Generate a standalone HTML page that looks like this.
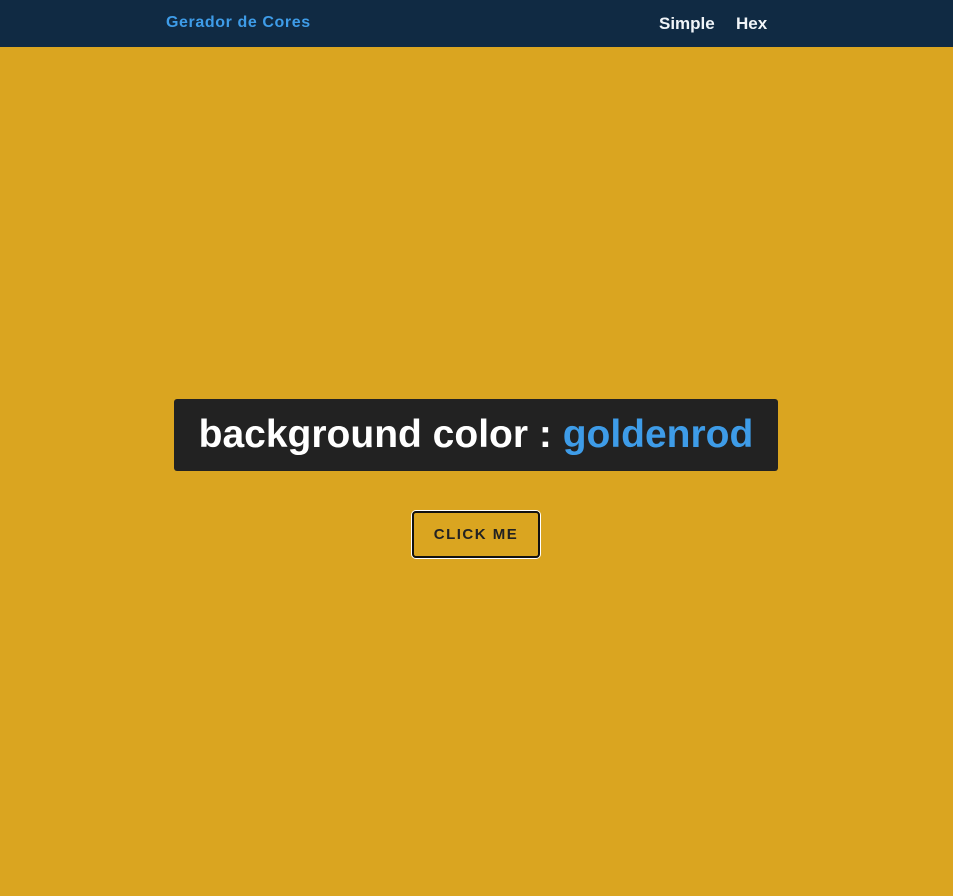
<!DOCTYPE html>
<html><head><style>
body{margin:0;width:953px;height:896px;background:#daa520;font-family:"Liberation Sans",sans-serif;position:relative;overflow:hidden}
nav{position:absolute;left:0;top:0;width:953px;height:47px;background:#102a43}
.brand{position:absolute;left:166px;top:14px;color:#3e9ce8;font-weight:bold;font-size:16px;letter-spacing:0.6px}
.l{position:absolute;top:14px;color:#f0f4f8;font-weight:bold;font-size:17px}
.box{position:absolute;left:174px;top:399px;width:604px;height:72px;background:#222;border-radius:3px;color:#fff;font-weight:bold;font-size:39px;line-height:72px;text-align:center}
.box span{color:#3e9ce8}
.btn{position:absolute;left:412px;top:511px;width:124px;height:43px;border:2px solid #111;border-radius:4px;box-shadow:0 0 0 1px #fff;color:#222;font-weight:bold;font-size:15px;letter-spacing:1.5px;line-height:44px;text-align:center}
</style></head><body>
<nav><div class="brand">Gerador de Cores</div><div class="l" style="left:659px">Simple</div><div class="l" style="left:736px">Hex</div></nav>
<div class="box">background color : <span>goldenrod</span></div>
<div class="btn">CLICK ME</div>
</body></html>
